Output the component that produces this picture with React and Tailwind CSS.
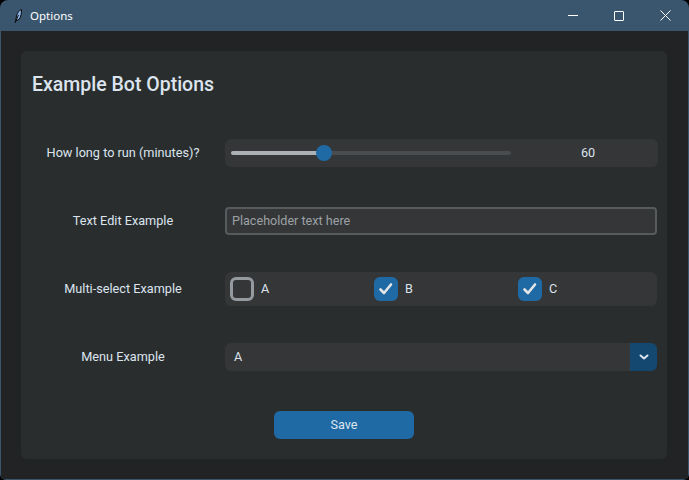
import React from 'react';

const Row = ({ label, children }) => (
  <div className="h-[68px] flex items-center">
    <div className="w-[204px] shrink-0 text-center text-[12.7px] text-[#dce4ee]">{label}</div>
    {children}
  </div>
);

const Check = ({ label, checked, className = '' }) => (
  <div className={`flex items-center gap-[7px] ${className}`}>
    {checked ? (
      <div className="w-6 h-6 rounded-[6px] bg-[#1f6aa5] flex items-center justify-center">
        <svg width="16" height="14" viewBox="0 0 16 14" fill="none">
          <path d="M2.5 7.5L6 11L13 2.5" stroke="#e5e5e5" strokeWidth="2.6" strokeLinecap="round" strokeLinejoin="round" />
        </svg>
      </div>
    ) : (
      <div className="w-6 h-6 rounded-[6px] border-[3px] border-[#949a9f]" />
    )}
    <span className="text-[12.6px] text-[#dce4ee] w-[12px]">{label}</span>
  </div>
);

export default function App() {
  return (
    <div className="w-[689px] h-[480px] bg-black font-['Roboto',sans-serif]">
      <div className="h-full rounded-t-[8px] rounded-b-[6px] overflow-hidden bg-[#3a566e] px-px pb-px flex flex-col">
        {/* title bar */}
        <div className="h-[31px] shrink-0 flex items-center pl-[12px] text-white">
          <svg width="12" height="16" viewBox="0 0 12 16" fill="none" className="mr-[5px]">
            <path d="M2.5 13.5L3.5 8C4.5 4.5 6 2.5 8.5 1.5C8.5 5 8 9 6 11.5L3.5 12.5Z" fill="#8ab4e8" stroke="#0a0a0a" strokeWidth="1" />
            <path d="M2 15L5.5 7" stroke="#0a0a0a" strokeWidth="1" />
          </svg>
          <span className="text-[11.5px] font-['Noto_Sans','Open_Sans',sans-serif] text-white">Options</span>
          <div className="ml-auto flex items-center">
            <div className="w-[46px] h-[31px] flex items-center justify-center">
              <div className="w-[10px] h-px bg-white" />
            </div>
            <div className="w-[46px] h-[31px] flex items-center justify-center">
              <div className="w-[10px] h-[10px] border border-white rounded-[1px]" />
            </div>
            <div className="w-[46px] h-[31px] flex items-center justify-center">
              <svg width="11" height="11" viewBox="0 0 11 11" stroke="#fff" strokeWidth="1">
                <path d="M0.5 0.5L10.5 10.5M10.5 0.5L0.5 10.5" />
              </svg>
            </div>
          </div>
        </div>

        {/* window body */}
        <div className="flex-1 bg-[#212325] pl-5 pr-[21px] pt-5 pb-5">
          <div className="h-[408px] bg-[#2a2d2e] rounded-[6px] pr-[10px]">
            <div className="h-[68px] flex items-center pl-[11px]">
              <h1 className="text-[19.5px] font-medium text-[#dce4ee]">Example Bot Options</h1>
            </div>

            <Row label="How long to run (minutes)?">
              <div className="flex-1 h-7 mr-[-1px] rounded-[6px] bg-[#343638] flex items-center pl-[6px]">
                <div className="w-[280px] h-1 rounded-full bg-[#4a4d50] relative">
                  <div className="w-[93px] h-1 rounded-full bg-[#aab0b5]" />
                  <div className="absolute left-[85px] top-[-6px] w-4 h-4 rounded-full bg-[#1f6aa5]" />
                </div>
                <span className="ml-[70px] text-[12.6px] text-[#dce4ee]">60</span>
              </div>
            </Row>

            <Row label="Text Edit Example">
              <div className="flex-1 h-7 rounded-[4px] border-2 border-[#565b5e] bg-[#343638] flex items-center pl-[5px] text-[12.6px] text-[#9ca1a5]">
                Placeholder text here
              </div>
            </Row>

            <Row label="Multi-select Example">
              <div className="flex-1 h-[34px] rounded-[6px] bg-[#343638] flex items-center pl-[5px]">
                <Check label="A" className="w-[144px]" />
                <Check label="B" checked className="w-[144px]" />
                <Check label="C" checked />
              </div>
            </Row>

            <Row label="Menu Example">
              <div className="flex-1 h-7 rounded-[6px] bg-[#343638] flex items-center overflow-hidden">
                <span className="pl-[9px] text-[12.6px] text-[#dce4ee]">A</span>
                <div className="ml-auto w-[27px] h-full bg-[#144870] flex items-center justify-center">
                  <svg width="10" height="7" viewBox="0 0 10 7" fill="none">
                    <path d="M1.5 1.5L5 4.5L8.5 1.5" stroke="#dce4ee" strokeWidth="2" strokeLinecap="round" strokeLinejoin="round" />
                  </svg>
                </div>
              </div>
            </Row>

            <div className="h-[68px] flex items-center justify-center pl-[10px]">
              <button className="w-[140px] h-7 rounded-[6px] bg-[#1f6aa5] text-[12.6px] text-[#dce4ee]">Save</button>
            </div>
          </div>
        </div>
      </div>
    </div>
  );
}
